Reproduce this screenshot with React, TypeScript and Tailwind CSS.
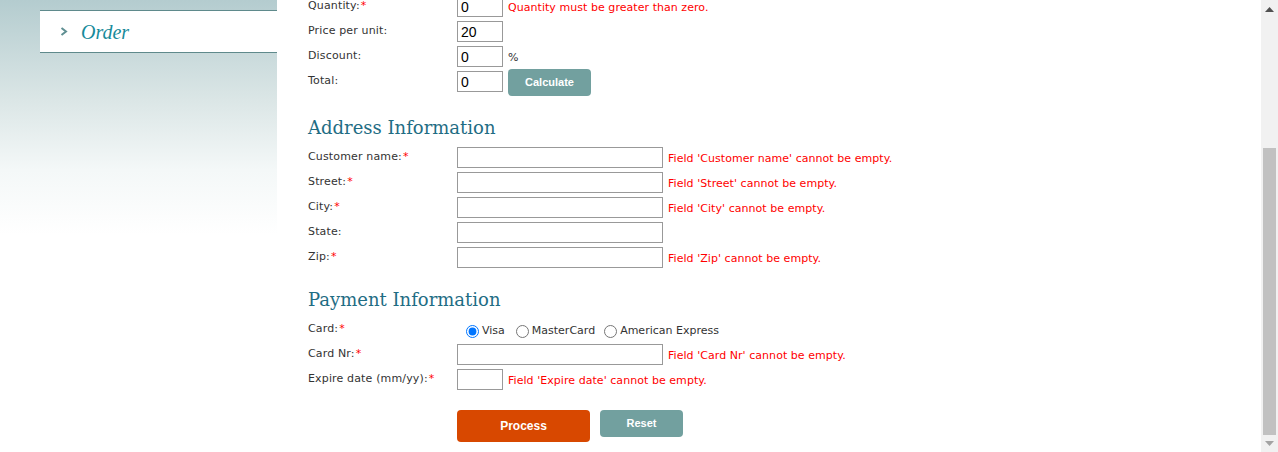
import React from "react";

const sans = { fontFamily: '"DejaVu Sans", Verdana, sans-serif' };

function Label({ text, req }: { text: string; req?: boolean }) {
  return (
    <div className="w-[149px] shrink-0 pt-[3px] text-[11px] leading-[14px] tracking-[0.15px] text-[#333]" style={sans}>
      {text}
      {req && <span className="ml-[1px] text-[#ff0000]">*</span>}
    </div>
  );
}

function Err({ text }: { text: string }) {
  return (
    <div className="ml-[5px] pt-[5px] text-[11px] leading-[14px] tracking-[0.05px] text-[#ff0000]" style={sans}>
      {text}
    </div>
  );
}

function Box({ wide, value }: { wide?: boolean; value?: string }) {
  return (
    <input
      readOnly
      value={value ?? ""}
      className={`${wide ? "w-[206px]" : "w-[46px]"} h-[21px] shrink-0 border border-[#999] bg-white px-[3px] font-['Liberation_Sans',Arial,sans-serif] text-[14px] leading-[19px] text-black outline-none`}
    />
  );
}

function Row({ children }: { children: React.ReactNode }) {
  return <div className="flex h-[25px] items-start">{children}</div>;
}

function Heading({ text }: { text: string }) {
  return (
    <div className="h-[24px] font-['DejaVu_Serif',Georgia,serif] text-[18px] leading-[24px] text-[#1f6d84]">
      {text}
    </div>
  );
}

function Radio({ label, checked, ml }: { label: string; checked?: boolean; ml: string }) {
  return (
    <label className={`flex items-center ${ml}`}>
      <input type="radio" name="card" defaultChecked={checked} className="m-0 h-[13px] w-[13px] accent-[#0075ff]" />
      <span className="ml-[3px] text-[11px] leading-[14px] text-[#333]" style={sans}>
        {label}
      </span>
    </label>
  );
}

export default function App() {
  return (
    <div className="flex h-[452px] w-[1278px] overflow-hidden bg-white">
      <div className="flex flex-1">
        {/* Sidebar */}
        <div className="h-full w-[277px] shrink-0 bg-[linear-gradient(to_bottom,#b4cccf_0px,#dbe6e6_100px,#f4f8f8_170px,#ffffff_235px)] pt-[10px]">
          <div className="ml-[40px] flex h-[43px] items-center border-y border-[#5f8a8c] bg-white">
            <svg width="8" height="9" viewBox="0 0 8 9" className="ml-[20px]">
              <polyline points="1.5,1 6,4.5 1.5,8" fill="none" stroke="#5f8f92" strokeWidth="2" />
            </svg>
            <span className="ml-[13px] font-['Liberation_Serif',Georgia,serif] text-[20px] italic text-[#178b9b]">
              Order
            </span>
          </div>
        </div>

        {/* Content */}
        <div className="mt-[-4px] pl-[31px]">
          <Row>
            <Label text="Quantity:" req />
            <Box value="0" />
            <Err text="Quantity must be greater than zero." />
          </Row>
          <Row>
            <Label text="Price per unit:" />
            <Box value="20" />
          </Row>
          <Row>
            <Label text="Discount:" />
            <Box value="0" />
            <div className="ml-[5px] pt-[5px] text-[11px] leading-[14px] text-[#333]" style={sans}>
              %
            </div>
          </Row>
          <Row>
            <Label text="Total:" />
            <Box value="0" />
            <button className="ml-[5px] mt-[-2px] h-[27px] w-[83px] rounded-[4px] bg-[#72a09f] font-['Liberation_Sans',Arial,sans-serif] text-[11px] font-bold text-white">
              Calculate
            </button>
          </Row>

          <div className="mt-[20px] mb-[7px]">
            <Heading text="Address Information" />
          </div>
          <Row>
            <Label text="Customer name:" req />
            <Box wide />
            <Err text="Field 'Customer name' cannot be empty." />
          </Row>
          <Row>
            <Label text="Street:" req />
            <Box wide />
            <Err text="Field 'Street' cannot be empty." />
          </Row>
          <Row>
            <Label text="City:" req />
            <Box wide />
            <Err text="Field 'City' cannot be empty." />
          </Row>
          <Row>
            <Label text="State:" />
            <Box wide />
          </Row>
          <Row>
            <Label text="Zip:" req />
            <Box wide />
            <Err text="Field 'Zip' cannot be empty." />
          </Row>

          <div className="mt-[16px] mb-[7px]">
            <Heading text="Payment Information" />
          </div>
          <Row>
            <Label text="Card:" req />
            <div className="flex pt-[5px]">
              <Radio label="Visa" checked ml="ml-[9px]" />
              <Radio label="MasterCard" ml="ml-[11px]" />
              <Radio label="American Express" ml="ml-[9px]" />
            </div>
          </Row>
          <Row>
            <Label text="Card Nr:" req />
            <Box wide />
            <Err text="Field 'Card Nr' cannot be empty." />
          </Row>
          <Row>
            <Label text="Expire date (mm/yy):" req />
            <Box />
            <Err text="Field 'Expire date' cannot be empty." />
          </Row>

          <div className="mt-[16px] flex items-start pl-[149px]">
            <button className="h-[32px] w-[133px] rounded-[4px] bg-[#d84800] font-['Liberation_Sans',Arial,sans-serif] text-[12px] font-bold text-white">
              Process
            </button>
            <button className="ml-[10px] h-[27px] w-[83px] rounded-[4px] bg-[#72a09f] font-['Liberation_Sans',Arial,sans-serif] text-[11px] font-bold text-white">
              Reset
            </button>
          </div>
        </div>
      </div>

      {/* Scrollbar */}
      <div className="flex h-full w-[17px] shrink-0 flex-col items-center bg-[#f1f1f1]">
        <svg width="9" height="5" viewBox="0 0 9 5" className="mt-[7px]">
          <polygon points="0,5 9,5 4.5,0" fill="#505050" />
        </svg>
        <div className="mt-[136px] h-[287px] w-[13px] bg-[#c1c1c1]" />
        <svg width="9" height="5" viewBox="0 0 9 5" className="mt-[6px]">
          <polygon points="0,0 9,0 4.5,5" fill="#a3a3a3" />
        </svg>
      </div>
    </div>
  );
}
